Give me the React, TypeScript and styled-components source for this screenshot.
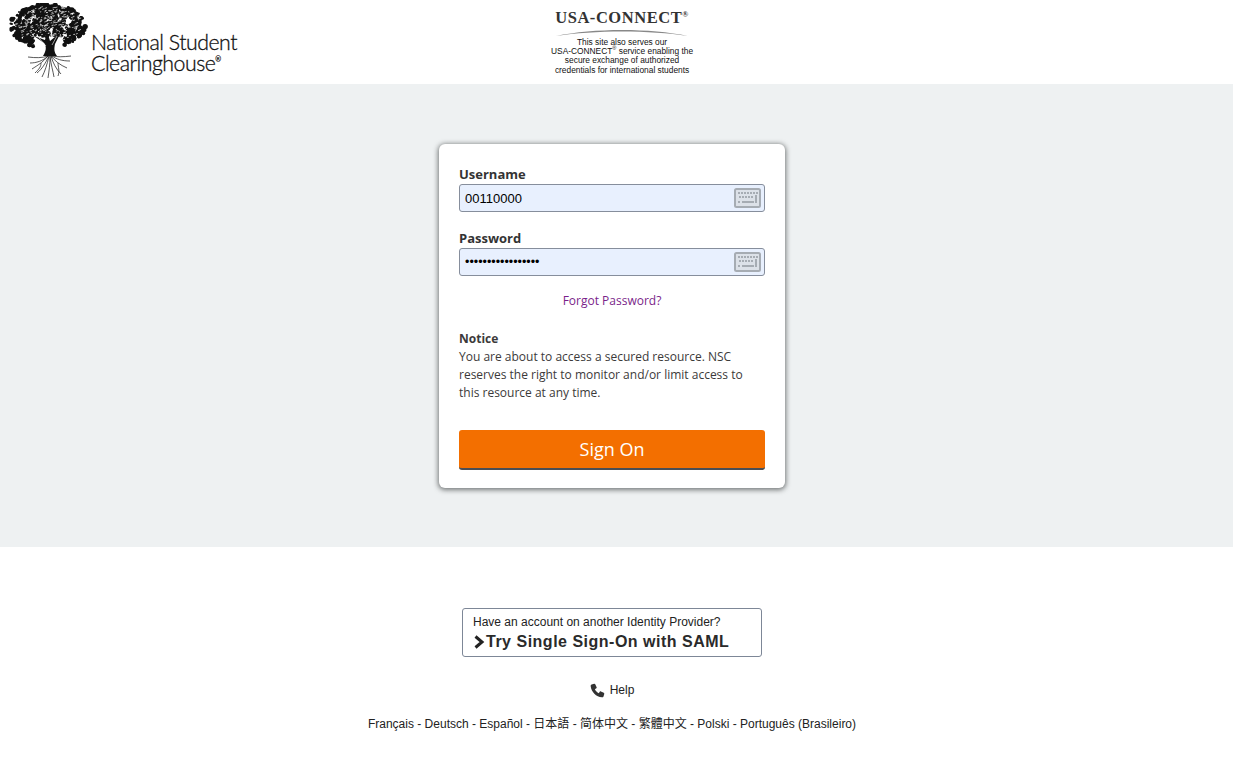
import React from 'react';
import styled, { createGlobalStyle } from 'styled-components';

const GlobalStyle = createGlobalStyle`
  html, body {
    margin: 0;
    padding: 0;
    background: #fff;
  }
  * {
    box-sizing: border-box;
  }
`;

// small seeded random so the tree canopy is the same on every load
const seeded = (seed: number) => () => {
  seed = (seed * 16807) % 2147483647;
  return (seed - 1) / 2147483646;
};

const rnd = seeded(4711);
const leaves = Array.from({ length: 520 }, () => {
  const a = rnd() * Math.PI * 2;
  const r = Math.sqrt(rnd());
  return { x: 40 + Math.cos(a) * r * 38, y: 23 + Math.sin(a) * r * 22, r: 0.9 + rnd() * 1.9 };
}).filter((l) => !(l.y > 33 && Math.abs(l.x - 41) < 15));
const specks = Array.from({ length: 210 }, () => {
  const a = rnd() * Math.PI * 2;
  const r = Math.sqrt(rnd());
  return { x: 40 + Math.cos(a) * r * 34, y: 21 + Math.sin(a) * r * 18, w: 1 + rnd() * 2.2 };
});
const roots = [
  'M40 53 C34 55 28 55 20 54',
  'M40 53 C35 58 28 60 22 60',
  'M40 53 C34 60 30 62 24 66',
  'M41 53 C37 61 34 66 29 70',
  'M41 53 C39 62 37 68 34 74',
  'M42 53 C42 62 41 68 40 75',
  'M42 53 C43 62 45 68 46 74',
  'M43 53 C45 60 48 66 53 71',
  'M43 53 C47 58 52 62 59 65',
  'M44 53 C48 56 54 58 62 58',
  'M44 53 C49 54 55 54 63 53',
  'M33 60 C33 64 31 66 27 70',
  'M50 60 C50 64 52 68 50 73',
];

const TreeIcon = () => (
  <svg width="84" height="78" viewBox="0 0 84 78">
    <g fill="#111">
      {leaves.map((l, i) => (
        <circle key={i} cx={l.x} cy={l.y} r={l.r} />
      ))}
    </g>
    <g fill="#fff" opacity="0.75">
      {specks.map((s, i) => (
        <rect key={i} x={s.x} y={s.y} width={s.w} height="0.8" transform={`rotate(-20 ${s.x} ${s.y})`} />
      ))}
    </g>
    <path
      d="M35 53 C38 48 39 44 36 40 L26 33 L37 37 L39 28 L42 38 L53 29 L47 41 C46 46 46 49 49 53 Z"
      fill="#111"
    />
    <path d="M31 35 L38 43 M49 33 L44 42" stroke="#fff" strokeWidth="0.6" fill="none" />
    <g stroke="#111" strokeWidth="0.7" fill="none">
      {roots.map((d) => (
        <path key={d} d={d} />
      ))}
    </g>
  </svg>
);

const KeyboardIcon = () => (
  <svg width="27" height="20" viewBox="0 0 27 20">
    <rect x="1" y="1" width="25" height="18" rx="1.5" fill="#dce1e8" stroke="#a6acb3" strokeWidth="2" />
    <g fill="#a6acb3">
      {[4, 7, 10, 13, 16, 19, 22].map((x) => (
        <rect key={x} x={x} y="4" width="2" height="2" />
      ))}
      {[5, 8, 11, 14, 17].map((x) => (
        <rect key={x} x={x} y="8" width="2" height="2" />
      ))}
      <rect x="21" y="7" width="2" height="7" />
      <rect x="4" y="13" width="2" height="2" />
      <rect x="8" y="13" width="12" height="2" />
      <rect x="21" y="13" width="2" height="2" />
    </g>
  </svg>
);

const ChevronIcon = () => (
  <svg width="12" height="14" viewBox="0 0 12 14">
    <path d="M2.5 1.5 L9 7 L2.5 12.5" fill="none" stroke="#222" strokeWidth="3" />
  </svg>
);

const PhoneIcon = () => (
  <svg width="15" height="15" viewBox="0 0 24 24">
    <path
      fill="#333"
      d="M6.6 1.2 L2.6 2.4 C1.4 2.8 1 3.8 1.1 5 C1.8 13.8 10.2 22.2 19 22.9 C20.2 23 21.2 22.6 21.6 21.4 L22.8 17.4 C23 16.6 22.7 16 22 15.6 L17.4 13.4 C16.7 13.1 16 13.3 15.6 13.9 L14 16.2 C11.4 15 9 12.6 7.8 10 L10.1 8.4 C10.7 8 10.9 7.3 10.6 6.6 L8.4 2 C8 1.3 7.4 1 6.6 1.2 Z"
    />
  </svg>
);

const Header = styled.header`
  height: 84px;
  display: flex;
  background: #fff;
`;

const LogoSlot = styled.div`
  width: 544px;
  padding: 3px 0 0 8px;
  display: flex;
  align-items: flex-start;
`;

const LogoName = styled.div`
  margin: 29px 0 0 -1px;
  font-family: 'Lato', sans-serif;
  font-size: 21.3px;
  font-weight: 300;
  line-height: 21px;
  letter-spacing: -0.5px;
  color: #111;
  -webkit-text-stroke: 0.3px #111;

  sup {
    font-size: 7px;
    line-height: 0;
    vertical-align: 9px;
  }
`;

const PartnerSlot = styled.div`
  width: 156px;
  padding-top: 9px;
  display: flex;
  flex-direction: column;
  align-items: center;
`;

const PartnerName = styled.div`
  font-family: 'Liberation Serif', serif;
  font-size: 16.5px;
  font-weight: 700;
  line-height: 18px;
  color: #333;
  letter-spacing: 0.55px;
  white-space: nowrap;

  sup {
    font-size: 8px;
    line-height: 0;
  }
`;

const PartnerArc = styled.svg`
  display: block;
`;

const PartnerText = styled.div`
  margin-top: 1px;
  font-family: 'Liberation Sans', sans-serif;
  font-size: 9.2px;
  line-height: 9.2px;
  text-align: center;
  color: #111;
  white-space: nowrap;
  transform: scaleX(0.91);

  sup {
    font-size: 6px;
    line-height: 0;
  }
`;

const Band = styled.main`
  height: 463px;
  padding-top: 60px;
  background: #eef1f2;
  display: flex;
  justify-content: center;
`;

const Card = styled.section`
  width: 346px;
  height: 344px;
  margin-right: 9px;
  padding: 20px;
  background: #fff;
  border-radius: 6px;
  box-shadow: 0 1px 5px 1px rgba(50, 55, 55, 0.65);
  font-family: 'Open Sans', sans-serif;
  color: #3c3a3a;
`;

const FieldLabel = styled.label`
  display: block;
  height: 20px;
  font-size: 13px;
  font-weight: 700;
  line-height: 20px;
  color: #333;
`;

const Field = styled.div`
  position: relative;
  height: 28px;
  margin-bottom: 16px;
`;

const FieldInput = styled.input`
  width: 100%;
  height: 100%;
  padding: 0 40px 0 5px;
  border: 1px solid #868e9c;
  border-radius: 3px;
  background: #e8f0fe;
  color: #000;
  font-family: 'Liberation Sans', sans-serif;
  font-size: ${(p) => (p.type === 'password' ? '12.5px' : '13px')};
  outline: none;
`;

const FieldKey = styled.span`
  position: absolute;
  top: 4px;
  right: 4px;
  display: flex;
`;

const ForgotLink = styled.a`
  display: block;
  margin-top: 16px;
  font-size: 12px;
  line-height: 18px;
  text-align: center;
  color: #7b1f8a;
  text-decoration: none;
`;

const NoticeBlock = styled.div`
  margin-top: 20px;
  font-size: 12px;
  line-height: 18px;
  color: #3c3a3a;
`;

const NoticeTitle = styled.div`
  font-weight: 700;
`;

const SignOnButton = styled.button`
  display: block;
  width: 100%;
  height: 40px;
  margin-top: 28px;
  border: 0;
  border-bottom: 2px solid #4a4e55;
  border-radius: 3px;
  background: #f36f00;
  color: #fff;
  font-family: 'Open Sans', sans-serif;
  font-size: 18px;
  line-height: 36px;
`;

const Footer = styled.footer`
  padding: 61px 9px 0 0;
  display: flex;
  flex-direction: column;
  align-items: center;
  font-family: 'Liberation Sans', sans-serif;
  color: #222;
`;

const SamlBox = styled.a`
  display: block;
  width: 300px;
  height: 49px;
  padding: 6px 10px;
  border: 1px solid #7d8797;
  border-radius: 3px;
  font-size: 12px;
  line-height: 15px;
`;

const SamlTitle = styled.div`
  margin-top: 3px;
  display: flex;
  align-items: center;
  gap: 1px;
  font-size: 16px;
  font-weight: 700;
  line-height: 18px;
  letter-spacing: 0.5px;
  color: #2a2a2a;
`;

const HelpLink = styled.a`
  margin-top: 25px;
  display: flex;
  align-items: center;
  gap: 5px;
  font-size: 12px;
  line-height: 16px;
`;

const LanguageRow = styled.div`
  margin-top: 18px;
  font-family: 'Liberation Sans', 'Noto Sans CJK TC', sans-serif;
  font-size: 12px;
  line-height: 16px;
  white-space: nowrap;
`;

export default function App() {
  return (
    <>
      <GlobalStyle />
      <Header>
        <LogoSlot>
          <TreeIcon />
          <LogoName>
            National Student
            <br />
            Clearinghouse<sup>®</sup>
          </LogoName>
        </LogoSlot>
        <PartnerSlot>
          <PartnerName>
            USA-CONNECT<sup>®</sup>
          </PartnerName>
          <PartnerArc width="136" height="10" viewBox="0 0 136 10">
            <path d="M2 9 C40 1 96 1 134 9 C96 3 40 3 2 9 Z" fill="#888" />
          </PartnerArc>
          <PartnerText>
            This site also serves our
            <br />
            USA-CONNECT<sup>®</sup> service enabling the
            <br />
            secure exchange of authorized
            <br />
            credentials for international students
          </PartnerText>
        </PartnerSlot>
      </Header>
      <Band>
        <Card>
          <FieldLabel>Username</FieldLabel>
          <Field>
            <FieldInput type="text" defaultValue="00110000" readOnly />
            <FieldKey>
              <KeyboardIcon />
            </FieldKey>
          </Field>
          <FieldLabel>Password</FieldLabel>
          <Field>
            <FieldInput type="password" defaultValue="abcdefghijklmnopq" readOnly />
            <FieldKey>
              <KeyboardIcon />
            </FieldKey>
          </Field>
          <ForgotLink>Forgot Password?</ForgotLink>
          <NoticeBlock>
            <NoticeTitle>Notice</NoticeTitle>
            You are about to access a secured resource. NSC
            <br />
            reserves the right to monitor and/or limit access to
            <br />
            this resource at any time.
          </NoticeBlock>
          <SignOnButton>Sign On</SignOnButton>
        </Card>
      </Band>
      <Footer>
        <SamlBox>
          Have an account on another Identity Provider?
          <SamlTitle>
            <ChevronIcon />
            Try Single Sign-On with SAML
          </SamlTitle>
        </SamlBox>
        <HelpLink>
          <PhoneIcon />
          Help
        </HelpLink>
        <LanguageRow>
          Français - Deutsch - Español - 日本語 - 简体中文 - 繁體中文 - Polski - Português (Brasileiro)
        </LanguageRow>
      </Footer>
    </>
  );
}
